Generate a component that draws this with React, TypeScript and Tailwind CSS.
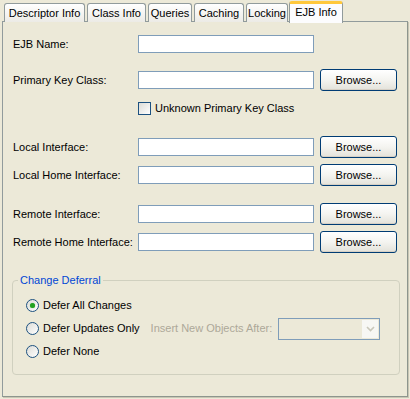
import React from "react";

const Field = ({ w = 176 }: { w?: number }) => (
  <div className="h-[18px] bg-white border border-[#7F9DB9]" style={{ width: w }} />
);

const Browse = () => (
  <button className="w-[77px] h-[22px] ml-[6px] rounded-[3px] border border-[#003C74] bg-gradient-to-b from-[#FFFFFF] via-[#F4F4F0] to-[#E3E2DA] text-[11px] text-black leading-none flex items-center justify-center shadow-[inset_0_-1px_0_#D6D0C5]">
    Browse...
  </button>
);

const Row = ({ label, button = true }: { label: string; button?: boolean }) => (
  <div className="flex items-center h-[22px]">
    <div className="w-[125px] text-black">{label}</div>
    <Field />
    {button && <Browse />}
  </div>
);

const Radio = ({ checked, label }: { checked?: boolean; label: string }) => (
  <div className="flex items-center h-[23px]">
    <div className="w-[13px] h-[13px] rounded-full border border-[#1C5180] bg-gradient-to-br from-[#DCDCD7] to-[#FFFFFF] flex items-center justify-center">
      {checked && <div className="w-[5px] h-[5px] rounded-full bg-[#21A121] shadow-[0_0_1px_#5BC85B]" />}
    </div>
    <span className="ml-[4px] text-black">{label}</span>
  </div>
);

const Tab = ({ label, w }: { label: string; w: number }) => (
  <div
    className="h-[19px] mr-[2px] border border-b-0 border-[#919B9C] rounded-t-[3px] bg-gradient-to-b from-[#FFFFFF] to-[#ECEBE6] flex items-center justify-center text-black"
    style={{ width: w }}
  >
    {label}
  </div>
);

export default function App() {
  return (
    <div className="w-[410px] h-[399px] bg-[#ECE9D8] font-['Liberation_Sans',Arial,sans-serif] text-[11px] relative overflow-hidden">
      <div className="flex items-end h-[22px] pl-[4px] relative z-10">
        <Tab label="Descriptor Info" w={81} />
        <Tab label="Class Info" w={59} />
        <Tab label="Queries" w={44} />
        <Tab label="Caching" w={50} />
        <Tab label="Locking" w={42} />
        <div className="h-[22px] w-[54px] -ml-[1px] border border-b-0 border-[#919B9C] border-t-[3px] border-t-[#FFC83C] rounded-t-[3px] bg-[#FCFCFE] flex items-center justify-center text-black -mb-px">
          <span className="-mt-[3px]">EJB Info</span>
        </div>
      </div>
      <div className="ml-[2px] w-[406px] h-[376px] -mt-px border border-[#919B9C] border-r-[#8D968E] border-b-[#8D968E] shadow-[1px_1px_0_#C9C6B4] bg-[#ECE9D8] pl-[10px] pr-[10px] pt-[11px]">
        <Row label="EJB Name:" button={false} />
        <div className="mt-[14px]">
          <Row label="Primary Key Class:" />
        </div>
        <div className="flex items-center h-[16px] mt-[9px] pl-[125px]">
          <div className="w-[13px] h-[13px] border border-[#1C5180] bg-gradient-to-br from-[#DCDCD7] to-[#FFFFFF]" />
          <span className="ml-[4px] text-black">Unknown Primary Key Class</span>
        </div>
        <div className="mt-[20px] flex flex-col gap-[6px]">
          <Row label="Local Interface:" />
          <Row label="Local Home Interface:" />
        </div>
        <div className="mt-[17px] flex flex-col gap-[6px]">
          <Row label="Remote Interface:" />
          <Row label="Remote Home Interface:" />
        </div>
        <div className="relative mt-[27px] w-[388px] h-[95px] -ml-px border border-[#D0D0BF] rounded-[4px] pl-[13px] pt-[13px]">
          <div className="absolute -top-[8px] left-[5px] px-[2px] bg-[#ECE9D8] text-[#0046D5] text-[11px] leading-[14px]">
            Change Deferral
          </div>
          <Radio checked label="Defer All Changes" />
          <div className="flex items-center">
            <Radio label="Defer Updates Only" />
            <span className="ml-[11px] text-[#ACA899]">Insert New Objects After:</span>
            <div className="ml-[6px] w-[102px] h-[22px] border border-[#7F9DB9] bg-[#ECE9D8] flex justify-end p-px">
              <div className="w-[16px] h-full bg-[#F7F7F4] flex items-center justify-center">
                <svg width="9" height="6" viewBox="0 0 9 6">
                  <path d="M1 1 L4.5 4.5 L8 1" stroke="#C9C7BA" strokeWidth="1.6" fill="none" />
                </svg>
              </div>
            </div>
          </div>
          <Radio label="Defer None" />
        </div>
      </div>
    </div>
  );
}
